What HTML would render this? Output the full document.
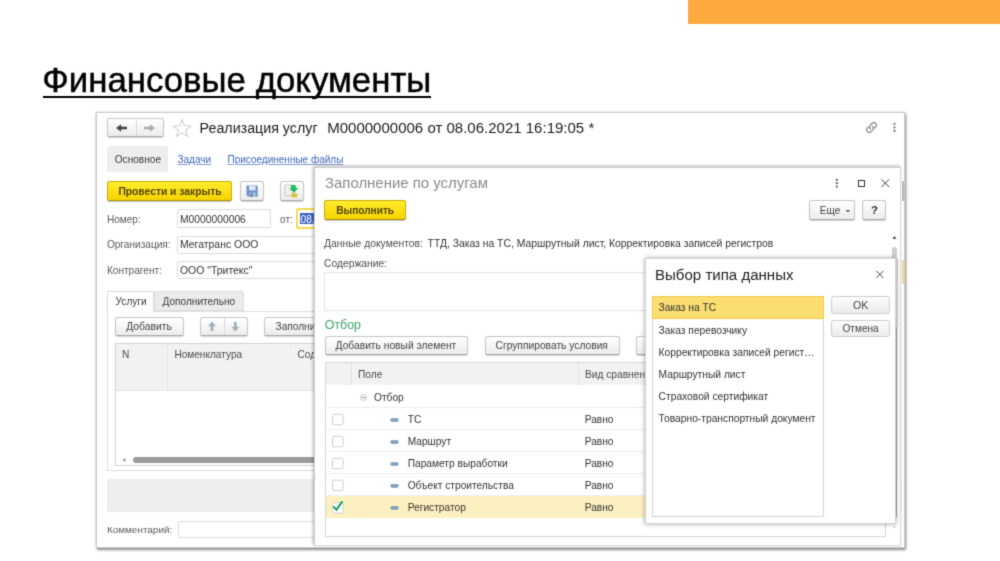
<!DOCTYPE html>
<html lang="ru"><head><meta charset="utf-8"><title>Финансовые документы</title>
<style>
html,body{margin:0;padding:0;background:#fff;}
body{width:1000px;height:561px;position:relative;overflow:hidden;font-family:"Liberation Sans",sans-serif;filter:url(#soft);}
body div,body span,body svg{position:absolute;box-sizing:border-box;}
body span{white-space:pre;}
</style></head><body>
<svg width="0" height="0" style="left:0;top:0"><defs><filter id="soft" x="0" y="0" width="100%" height="100%" color-interpolation-filters="sRGB"><feConvolveMatrix order="3" kernelMatrix="0.0196 0.1008 0.0196 0.1008 0.5184 0.1008 0.0196 0.1008 0.0196" edgeMode="duplicate" preserveAlpha="true"/></filter></defs></svg>
<div style="left:688.00px;top:0.00px;width:312.00px;height:23.50px;background:#fca93f;"></div>
<span style="left:42.30px;top:61.30px;font-size:34.8px;line-height:38px;color:#000;-webkit-text-stroke:0.45px #000;">Финансовые документы</span>
<div style="left:43.10px;top:95.60px;width:388.10px;height:2.50px;background:#000;"></div>
<div style="left:96.00px;top:111.50px;width:808.70px;height:436.70px;background:#fff;border:1px solid #cdcdcd;box-shadow:1px 1.5px 2.5px rgba(0,0,0,.42),0 0 3px rgba(0,0,0,.15);"></div>
<div style="left:106.60px;top:118.40px;width:57.90px;height:19.00px;border:1px solid #c6c6c6;border-bottom-color:#a9a9a9;border-radius:2.5px;background:linear-gradient(#ffffff,#ececec);box-shadow:0 1px 1px rgba(0,0,0,.18);"></div>
<div style="left:135.50px;top:119.50px;width:1.00px;height:16.70px;background:#d9d9d9;"></div>
<svg style="left:114px;top:122px" width="17" height="13"><g transform="translate(0.00,0.00)"><path d="M2 6 L7.2 2.2 V4.8 H13 V7.2 H7.2 V9.8 Z" fill="#444"/></g></svg>
<svg style="left:142px;top:122px" width="17" height="13"><g transform="translate(0.00,0.00)"><path d="M13 6 L7.8 2.2 V4.8 H2 V7.2 H7.8 V9.8 Z" fill="#ababab"/></g></svg>
<svg style="left:171px;top:117px" width="22" height="22"><g transform="translate(0.60,0.60) scale(0.9545,0.9545)"><path d="M11 2.2 L13.4 8.6 L20.3 8.9 L14.9 13.2 L16.8 19.8 L11 16 L5.2 19.8 L7.1 13.2 L1.7 8.9 L8.6 8.6 Z" fill="#fff" stroke="#cfcfcf" stroke-width="1.1"/></g></svg>
<span style="left:199.60px;top:119.90px;font-size:14.25px;line-height:16px;color:#1c1c1c;">Реализация услуг</span>
<span style="left:327.20px;top:118.90px;font-size:15.02px;line-height:17px;color:#1c1c1c;">M0000000006 от 08.06.2021 16:19:05 *</span>
<svg style="left:864px;top:120px" width="16" height="16"><g transform="translate(0.00,0.00)"><g fill="none" stroke="#8a8a8a" stroke-width="1.3" stroke-linecap="round"><path d="M6.3 8.7 a2.6 2.6 0 0 1 0 -3.6 l2.1 -2.1 a2.6 2.6 0 0 1 3.6 3.6 l-1.1 1.1"/><path d="M8.7 6.3 a2.6 2.6 0 0 1 0 3.6 l-2.1 2.1 a2.6 2.6 0 0 1 -3.6 -3.6 l1.1 -1.1"/></g></g></svg>
<svg style="left:892px;top:122px" width="6" height="12"><g transform="translate(0.00,0.00)"><g fill="#777"><circle cx="2.5" cy="1.8" r="1.15"/><circle cx="2.5" cy="5.4" r="1.15"/><circle cx="2.5" cy="9" r="1.15"/></g></g></svg>
<div style="left:107.20px;top:146.20px;width:60.80px;height:25.80px;background:#eeeeee;border-radius:2px;"></div>
<span style="left:114.75px;top:153.80px;font-size:10.1px;line-height:11px;color:#3a3a3a;">Основное</span>
<span style="left:177.50px;top:153.80px;font-size:10.0px;line-height:11px;color:#4166b8;text-decoration:underline;text-decoration-thickness:0.7px;text-underline-offset:0.9px;text-decoration-color:#7f9ad0;">Задачи</span>
<span style="left:227.50px;top:153.80px;font-size:10.0px;line-height:11px;color:#4166b8;text-decoration:underline;text-decoration-thickness:0.7px;text-underline-offset:0.9px;text-decoration-color:#7f9ad0;">Присоединенные файлы</span>
<div style="left:106.90px;top:181.30px;width:125.60px;height:20.00px;border:1px solid #c9ab10;border-bottom-color:#a98e08;border-radius:2.5px;background:linear-gradient(#ffec2b,#f6d400);box-shadow:0 1px 1px rgba(0,0,0,.22);"></div>
<span style="left:118.40px;top:186.00px;font-size:10.3px;line-height:11px;color:#54450c;font-weight:bold;">Провести и закрыть</span>
<div style="left:240.20px;top:181.30px;width:23.60px;height:20.00px;border:1px solid #c6c6c6;border-bottom-color:#a9a9a9;border-radius:2.5px;background:linear-gradient(#ffffff,#ececec);box-shadow:0 1px 1px rgba(0,0,0,.18);"></div>
<svg style="left:246px;top:185px" width="14" height="14"><g transform="translate(0.00,0.00)"><path d="M0.5 0.6 H11.6 V11.8 H2.2 L0.5 10.1 Z" fill="#6b90c6"/><rect x="3" y="0.9" width="6.6" height="4.6" fill="#dbe8f7"/><rect x="3.2" y="7.6" width="6.6" height="4.2" fill="#aebfd6"/><rect x="4.4" y="8.4" width="2.2" height="3.4" fill="#5a7eb3"/></g></svg>
<div style="left:280.20px;top:181.30px;width:23.60px;height:20.00px;border:1px solid #c6c6c6;border-bottom-color:#a9a9a9;border-radius:2.5px;background:linear-gradient(#ffffff,#ececec);box-shadow:0 1px 1px rgba(0,0,0,.18);"></div>
<svg style="left:284px;top:184px" width="17" height="16"><g transform="translate(0.00,0.00)"><rect x="1" y="1.2" width="9" height="10.4" fill="#fff" stroke="#b9b9b9" stroke-width="0.9"/><path d="M2.6 4.2 H6 M2.6 6.6 H8.4 M2.6 9 H8.4" stroke="#d7b9b9" stroke-width="0.7"/><path d="M6.8 1 H11.8 V4 H14.3 L9.9 8.9 L5.5 4.6 L6.8 4.2 Z" fill="#1fbe60"/><rect x="7.2" y="9.2" width="6" height="4.4" rx="1" fill="#d6c63c"/></g></svg>
<span style="left:106.90px;top:213.50px;font-size:10.1px;line-height:11px;color:#5a5a5a;">Номер:</span>
<div style="left:176.90px;top:208.80px;width:94.50px;height:18.80px;border:1px solid #dcdcdc;border-radius:2px;background:#fff;"></div>
<span style="left:180.00px;top:213.50px;font-size:10.3px;line-height:11px;color:#333;">M0000000006</span>
<span style="left:280.00px;top:213.50px;font-size:10.1px;line-height:11px;color:#5a5a5a;">от:</span>
<div style="left:296.20px;top:208.00px;width:40.00px;height:21.40px;border:2px solid #f6d94d;border-radius:2px;background:#fff;"></div>
<div style="left:300.20px;top:213.00px;width:30.00px;height:11.40px;background:#3f62c8;"></div>
<span style="left:300.60px;top:213.50px;font-size:10.1px;line-height:11px;color:#fff;">08.</span>
<span style="left:106.90px;top:239.10px;font-size:10.1px;line-height:11px;color:#5a5a5a;">Организация:</span>
<div style="left:177.20px;top:235.50px;width:200.00px;height:18.20px;border:1px solid #dcdcdc;border-radius:2px;background:#fff;"></div>
<span style="left:180.00px;top:239.10px;font-size:10.45px;line-height:11px;color:#333;">Мегатранс ООО</span>
<span style="left:106.90px;top:264.75px;font-size:10.1px;line-height:11px;color:#5a5a5a;">Контрагент:</span>
<div style="left:177.20px;top:261.20px;width:200.00px;height:18.30px;border:1px solid #dcdcdc;border-radius:2px;background:#fff;"></div>
<span style="left:180.00px;top:264.75px;font-size:10.45px;line-height:11px;color:#333;">ООО "Тритекс"</span>
<div style="left:106.50px;top:311.00px;width:400.00px;height:160.30px;border:1px solid #dedede;background:#fff;"></div>
<div style="left:154.00px;top:291.20px;width:89.60px;height:20.30px;background:#ebebeb;border:1px solid #dedede;border-radius:2px 2px 0 0;"></div>
<div style="left:106.50px;top:291.20px;width:47.80px;height:21.00px;background:#fff;border:1px solid #dadada;border-bottom:none;border-radius:2px 2px 0 0;"></div>
<span style="left:115.60px;top:296.00px;font-size:10.1px;line-height:11px;color:#3a3a3a;">Услуги</span>
<span style="left:162.50px;top:296.00px;font-size:10.1px;line-height:11px;color:#3a3a3a;">Дополнительно</span>
<div style="left:115.00px;top:316.90px;width:68.80px;height:18.80px;border:1px solid #c6c6c6;border-bottom-color:#a9a9a9;border-radius:2.5px;background:linear-gradient(#ffffff,#ececec);box-shadow:0 1px 1px rgba(0,0,0,.18);"></div>
<span style="left:126.25px;top:321.00px;font-size:10.35px;line-height:11px;color:#444;">Добавить</span>
<div style="left:200.00px;top:316.90px;width:47.60px;height:18.80px;border:1px solid #c6c6c6;border-bottom-color:#a9a9a9;border-radius:2.5px;background:linear-gradient(#ffffff,#ececec);box-shadow:0 1px 1px rgba(0,0,0,.18);"></div>
<div style="left:224.20px;top:317.90px;width:1.00px;height:16.80px;background:#d9d9d9;"></div>
<svg style="left:206px;top:320px" width="13" height="14"><g transform="translate(0.00,0.00)"><path d="M6 1.6 L10 6.2 H7.4 V11 H4.6 V6.2 H2 Z" fill="#9fb0ba"/></g></svg>
<svg style="left:229px;top:320px" width="13" height="14"><g transform="translate(0.30,0.00)"><path d="M6 11.4 L10 6.8 H7.4 V2 H4.6 V6.8 H2 Z" fill="#9fb0ba"/></g></svg>
<div style="left:263.80px;top:316.90px;width:80.00px;height:18.80px;border:1px solid #c6c6c6;border-bottom-color:#a9a9a9;border-radius:2.5px;background:linear-gradient(#ffffff,#ececec);box-shadow:0 1px 1px rgba(0,0,0,.18);"></div>
<span style="left:275.60px;top:321.00px;font-size:10.1px;line-height:11px;color:#444;">Заполнить</span>
<div style="left:115.00px;top:343.10px;width:300.00px;height:123.00px;border:1px solid #d2d2d2;background:#fff;"></div>
<div style="left:116.00px;top:344.10px;width:298.00px;height:46.60px;background:#f2f2f2;border-bottom:1px solid #e4e4e4;"></div>
<div style="left:167.20px;top:344.10px;width:1.00px;height:46.00px;background:#e6e6e6;"></div>
<div style="left:290.00px;top:344.10px;width:1.00px;height:46.00px;background:#ececec;"></div>
<span style="left:121.90px;top:349.10px;font-size:10.1px;line-height:11px;color:#4a4a4a;">N</span>
<span style="left:174.40px;top:349.10px;font-size:10.1px;line-height:11px;color:#4a4a4a;">Номенклатура</span>
<span style="left:297.50px;top:349.10px;font-size:10.1px;line-height:11px;color:#4a4a4a;">Содержание</span>
<svg style="left:121px;top:457px" width="7" height="7"><g transform="translate(0.00,0.00)"><path d="M4.4 0.8 L1.2 3 L4.4 5.2 Z" fill="#a5a5a5"/></g></svg>
<div style="left:133.00px;top:456.90px;width:300.00px;height:6.20px;background:#9b9b9b;border-radius:3.1px;"></div>
<div style="left:106.50px;top:479.00px;width:795.00px;height:33.00px;background:#eeeeee;"></div>
<span style="left:106.90px;top:523.50px;font-size:9.95px;line-height:11px;color:#5a5a5a;">Комментарий:</span>
<div style="left:177.50px;top:520.60px;width:700.00px;height:17.00px;border:1px solid #dcdcdc;border-radius:2px;background:#fff;"></div>
<div style="left:314.20px;top:166.60px;width:587.30px;height:379.60px;background:#fff;border:1px solid #cecece;border-right-color:#dcdcdc;border-bottom-color:#dcdcdc;box-shadow:-1px -1px 3px rgba(0,0,0,.3);"></div>
<div style="left:901.90px;top:260.00px;width:1.80px;height:24.00px;background:#f1dc84;"></div>
<div style="left:901.80px;top:181.00px;width:1.80px;height:20.00px;background:#b9b9b9;"></div>
<span style="left:325.00px;top:174.10px;font-size:14.94px;line-height:17px;color:#8c8c8c;">Заполнение по услугам</span>
<svg style="left:834px;top:178px" width="6" height="12"><g transform="translate(0.30,0.00)"><g fill="#555"><circle cx="2.5" cy="1.8" r="1.1"/><circle cx="2.5" cy="5.2" r="1.1"/><circle cx="2.5" cy="8.6" r="1.1"/></g></g></svg>
<div style="left:858.00px;top:179.80px;width:7.00px;height:7.20px;border:1.2px solid #333;"></div>
<svg style="left:880px;top:178px" width="12" height="12"><g transform="translate(0.00,0.00)"><path d="M1.4 1.2 L9.2 9 M9.2 1.2 L1.4 9" stroke="#444" stroke-width="1" fill="none"/></g></svg>
<div style="left:324.40px;top:200.30px;width:81.70px;height:20.00px;border:1px solid #c9ab10;border-bottom-color:#a98e08;border-radius:2.5px;background:linear-gradient(#ffec2b,#f6d400);box-shadow:0 1px 1px rgba(0,0,0,.22);"></div>
<span style="left:336.25px;top:204.70px;font-size:10.1px;line-height:11px;color:#54450c;font-weight:bold;">Выполнить</span>
<div style="left:808.50px;top:200.30px;width:46.30px;height:20.00px;border:1px solid #c6c6c6;border-bottom-color:#a9a9a9;border-radius:2.5px;background:linear-gradient(#ffffff,#ececec);box-shadow:0 1px 1px rgba(0,0,0,.18);"></div>
<span style="left:819.75px;top:204.75px;font-size:10.1px;line-height:11px;color:#444;">Еще</span>
<svg style="left:845px;top:209px" width="7" height="6"><g transform="translate(0.00,0.00)"><path d="M0.8 1 H5 L2.9 3.6 Z" fill="#555"/></g></svg>
<div style="left:862.20px;top:200.30px;width:23.80px;height:20.00px;border:1px solid #c6c6c6;border-bottom-color:#a9a9a9;border-radius:2.5px;background:linear-gradient(#ffffff,#ececec);box-shadow:0 1px 1px rgba(0,0,0,.18);"></div>
<span style="left:871.00px;top:204.30px;font-size:11.5px;line-height:12px;color:#333;font-weight:bold;">?</span>
<span style="left:324.00px;top:237.75px;font-size:10.33px;line-height:11px;color:#4d4d4d;">Данные документов:</span>
<span style="left:427.60px;top:237.75px;font-size:10.36px;line-height:11px;color:#333;">ТТД, Заказ на ТС, Маршрутный лист, Корректировка записей регистров</span>
<span style="left:324.00px;top:257.75px;font-size:10.3px;line-height:11px;color:#4d4d4d;">Содержание:</span>
<div style="left:324.40px;top:271.60px;width:561.40px;height:39.70px;border:1px solid #e5e5e5;background:#fff;"></div>
<svg style="left:891px;top:234px" width="7" height="7"><g transform="translate(0.50,0.50)"><path d="M3 1.2 L5 4.4 H1 Z" fill="#555"/></g></svg>
<div style="left:892.00px;top:247.20px;width:5.30px;height:180.00px;background:#cfcfcf;border-radius:2.6px;"></div>
<svg style="left:891px;top:525px" width="6" height="6"><g transform="translate(0.90,0.00)"><path d="M2.5 3.6 L3.9 1.4 H1.1 Z" fill="#b9b9b9"/></g></svg>
<span style="left:324.75px;top:318.40px;font-size:12.41px;line-height:14px;color:#3aa56b;">Отбор</span>
<div style="left:324.50px;top:335.60px;width:143.00px;height:19.20px;border:1px solid #c6c6c6;border-bottom-color:#a9a9a9;border-radius:2.5px;background:linear-gradient(#ffffff,#ececec);box-shadow:0 1px 1px rgba(0,0,0,.18);"></div>
<span style="left:335.60px;top:339.50px;font-size:10.25px;line-height:11px;color:#444;">Добавить новый элемент</span>
<div style="left:484.50px;top:335.60px;width:135.00px;height:19.20px;border:1px solid #c6c6c6;border-bottom-color:#a9a9a9;border-radius:2.5px;background:linear-gradient(#ffffff,#ececec);box-shadow:0 1px 1px rgba(0,0,0,.18);"></div>
<span style="left:495.50px;top:339.50px;font-size:10.25px;line-height:11px;color:#444;">Сгруппировать условия</span>
<div style="left:636.00px;top:335.60px;width:100.00px;height:19.20px;border:1px solid #c6c6c6;border-bottom-color:#a9a9a9;border-radius:2.5px;background:linear-gradient(#ffffff,#ececec);box-shadow:0 1px 1px rgba(0,0,0,.18);"></div>
<div style="left:324.50px;top:362.20px;width:561.30px;height:174.40px;border:1px solid #d6d6d6;background:#fff;"></div>
<div style="left:325.50px;top:363.20px;width:559.30px;height:22.00px;background:#f2f2f2;"></div>
<div style="left:351.00px;top:363.20px;width:1.00px;height:22.00px;background:#e3e3e3;"></div>
<div style="left:577.50px;top:363.20px;width:1.00px;height:22.00px;background:#e3e3e3;"></div>
<span style="left:358.00px;top:369.00px;font-size:10.2px;line-height:11px;color:#4a4a4a;">Поле</span>
<span style="left:585.00px;top:369.00px;font-size:10.2px;line-height:11px;color:#4a4a4a;">Вид сравнения</span>
<div style="left:325.50px;top:495.60px;width:559.30px;height:22.20px;background:#fdf0c0;"></div>
<div style="left:325.50px;top:407.00px;width:559.30px;height:1.00px;background:#eeeeee;"></div>
<div style="left:325.50px;top:429.30px;width:559.30px;height:1.00px;background:#eeeeee;"></div>
<div style="left:325.50px;top:451.30px;width:559.30px;height:1.00px;background:#eeeeee;"></div>
<div style="left:325.50px;top:473.30px;width:559.30px;height:1.00px;background:#eeeeee;"></div>
<div style="left:325.50px;top:495.30px;width:559.30px;height:1.00px;background:#eeeeee;"></div>
<svg style="left:359px;top:393px" width="9" height="9"><g transform="translate(0.50,0.50)"><circle cx="4" cy="4" r="2.9" fill="#fff" stroke="#b4b4b4" stroke-width="0.8"/><path d="M2.4 4 H5.6" stroke="#777" stroke-width="0.8"/></g></svg>
<span style="left:374.00px;top:392.00px;font-size:10.2px;line-height:11px;color:#333;">Отбор</span>
<svg style="left:332px;top:413px" width="13" height="13"><g transform="translate(0.00,0.80)"><rect x="0.5" y="0.5" width="10.6" height="10.4" rx="1.5" fill="#fff" stroke="#cfcfcf" stroke-width="1"/></g></svg>
<svg style="left:390px;top:418px" width="10" height="5"><g transform="translate(0.40,0.10)"><rect x="0.3" y="0.3" width="7.6" height="3.1" rx="1.55" fill="#86a2bd" stroke="#6a89a9" stroke-width="0.6"/></g></svg>
<span style="left:407.70px;top:414.00px;font-size:10.2px;line-height:11px;color:#333;">ТС</span>
<span style="left:584.70px;top:414.00px;font-size:10.2px;line-height:11px;color:#333;">Равно</span>
<svg style="left:332px;top:435px" width="13" height="13"><g transform="translate(0.00,0.80)"><rect x="0.5" y="0.5" width="10.6" height="10.4" rx="1.5" fill="#fff" stroke="#cfcfcf" stroke-width="1"/></g></svg>
<svg style="left:390px;top:440px" width="10" height="5"><g transform="translate(0.40,0.10)"><rect x="0.3" y="0.3" width="7.6" height="3.1" rx="1.55" fill="#86a2bd" stroke="#6a89a9" stroke-width="0.6"/></g></svg>
<span style="left:407.70px;top:436.00px;font-size:10.2px;line-height:11px;color:#333;">Маршрут</span>
<span style="left:584.70px;top:436.00px;font-size:10.2px;line-height:11px;color:#333;">Равно</span>
<svg style="left:332px;top:457px" width="13" height="13"><g transform="translate(0.00,0.80)"><rect x="0.5" y="0.5" width="10.6" height="10.4" rx="1.5" fill="#fff" stroke="#cfcfcf" stroke-width="1"/></g></svg>
<svg style="left:390px;top:462px" width="10" height="5"><g transform="translate(0.40,0.10)"><rect x="0.3" y="0.3" width="7.6" height="3.1" rx="1.55" fill="#86a2bd" stroke="#6a89a9" stroke-width="0.6"/></g></svg>
<span style="left:407.70px;top:458.00px;font-size:10.2px;line-height:11px;color:#333;">Параметр выработки</span>
<span style="left:584.70px;top:458.00px;font-size:10.2px;line-height:11px;color:#333;">Равно</span>
<svg style="left:332px;top:479px" width="13" height="13"><g transform="translate(0.00,0.70)"><rect x="0.5" y="0.5" width="10.6" height="10.4" rx="1.5" fill="#fff" stroke="#cfcfcf" stroke-width="1"/></g></svg>
<svg style="left:390px;top:484px" width="10" height="5"><g transform="translate(0.40,0.00)"><rect x="0.3" y="0.3" width="7.6" height="3.1" rx="1.55" fill="#86a2bd" stroke="#6a89a9" stroke-width="0.6"/></g></svg>
<span style="left:407.70px;top:479.90px;font-size:10.2px;line-height:11px;color:#333;">Объект строительства</span>
<span style="left:584.70px;top:479.90px;font-size:10.2px;line-height:11px;color:#333;">Равно</span>
<svg style="left:332px;top:502px" width="13" height="13"><g transform="translate(0.00,0.30)"><rect x="0.5" y="0.5" width="10.6" height="10.4" rx="1.5" fill="#fff" stroke="#cfcfcf" stroke-width="1"/></g></svg>
<svg style="left:390px;top:506px" width="10" height="5"><g transform="translate(0.40,0.00)"><rect x="0.3" y="0.3" width="7.6" height="3.1" rx="1.55" fill="#86a2bd" stroke="#6a89a9" stroke-width="0.6"/></g></svg>
<span style="left:407.70px;top:501.90px;font-size:10.2px;line-height:11px;color:#333;">Регистратор</span>
<span style="left:584.70px;top:501.90px;font-size:10.2px;line-height:11px;color:#333;">Равно</span>
<svg style="left:331px;top:499px" width="14" height="14"><g transform="translate(0.40,0.60) scale(0.9286,0.9286)"><path d="M2.2 7.4 L5.4 11 L12 1.8" fill="none" stroke="#0f9d58" stroke-width="2.1" stroke-linejoin="miter"/></g></svg>
<div style="left:645.40px;top:258.20px;width:251.00px;height:265.80px;background:#fff;border:1px solid #d4d4d4;box-shadow:0 0 4.5px rgba(0,0,0,.36);"></div>
<div style="left:896.20px;top:259.00px;width:1.40px;height:68.00px;background:#c6c6c6;"></div>
<div style="left:896.00px;top:326.80px;width:1.40px;height:190.00px;background:#8c8c8c;"></div>
<span style="left:655.00px;top:265.90px;font-size:15.05px;line-height:17px;color:#222;">Выбор типа данных</span>
<svg style="left:875px;top:269px" width="11" height="11"><g transform="translate(0.00,0.50)"><path d="M1.4 1.4 L8.4 8.4 M8.4 1.4 L1.4 8.4" stroke="#444" stroke-width="1" fill="none"/></g></svg>
<div style="left:651.60px;top:296.40px;width:172.60px;height:220.80px;border:1px solid #d4d4d4;background:#fff;"></div>
<div style="left:651.60px;top:296.40px;width:172.60px;height:22.60px;background:#fbdd70;border:1.6px solid #f0c84c;"></div>
<span style="left:658.60px;top:302.40px;font-size:10.25px;line-height:11px;color:#333;">Заказ на ТС</span>
<span style="left:658.60px;top:324.70px;font-size:10.25px;line-height:11px;color:#333;">Заказ перевозчику</span>
<span style="left:658.60px;top:346.70px;font-size:10.25px;line-height:11px;color:#333;">Корректировка записей регист…</span>
<span style="left:658.60px;top:368.80px;font-size:10.25px;line-height:11px;color:#333;">Маршрутный лист</span>
<span style="left:658.60px;top:390.80px;font-size:10.25px;line-height:11px;color:#333;">Страховой сертификат</span>
<span style="left:658.60px;top:412.90px;font-size:10.25px;line-height:11px;color:#333;">Товарно-транспортный документ</span>
<div style="left:830.60px;top:296.20px;width:59.20px;height:17.40px;border:1px solid #cdcdcd;border-radius:2.5px;background:linear-gradient(#fdfdfd,#ebebeb);"></div>
<span style="left:853.00px;top:298.50px;font-size:10.6px;line-height:12px;color:#444;">OK</span>
<div style="left:830.60px;top:320.00px;width:59.20px;height:17.30px;border:1px solid #cdcdcd;border-radius:2.5px;background:linear-gradient(#fdfdfd,#ebebeb);"></div>
<span style="left:842.50px;top:323.25px;font-size:10.1px;line-height:11px;color:#444;">Отмена</span>
</body></html>
